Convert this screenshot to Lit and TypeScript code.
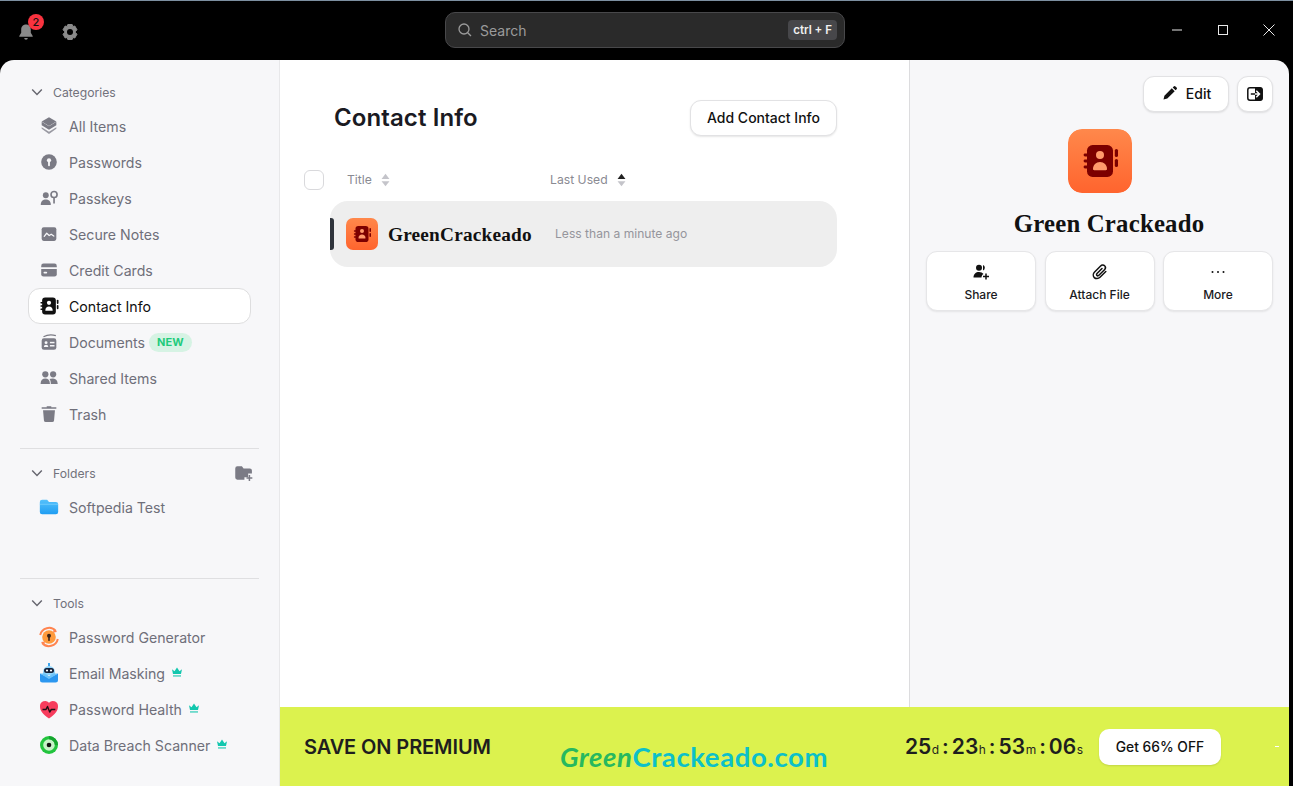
import { LitElement, html, css, svg } from "lit";
import { customElement } from "lit/decorators.js";

const G = "#7b7b85";
const PANEL = "#f7f7f9";
const book = (body: string, cut: string) => svg`
  <rect x="5.500" y="4" width="13" height="16" rx="2.800" fill="${body}"/>
  <rect x="3.800" y="8.300" width="3" height="1.400" rx=".7" fill="${body}"/>
  <rect x="3.800" y="11.300" width="3" height="1.400" rx=".7" fill="${body}"/>
  <rect x="3.800" y="14.300" width="3" height="1.400" rx=".7" fill="${body}"/>
  <rect x="19.400" y="6" width="1.600" height="4" rx=".8" fill="${body}"/>
  <rect x="19.400" y="11" width="1.600" height="4" rx=".8" fill="${body}"/>
  <circle cx="12" cy="9" r="2" fill="${cut}"/>
  <path d="M8.500 16c0-2 1.500-3.500 3.500-3.500s3.500 1.500 3.500 3.500c0 .4-.3.6-.6.6H9.100c-.3 0-.6-.2-.6-.6z" fill="${cut}"/>`;

const icons: Record<string, any> = {
  all: svg`<path d="M12 2.500 20 7.200 12 12 4 7.200z" fill="${G}"/><path d="M4 7.400 12 12.200 20 7.400V11.200L12 16 4 11.200z" fill="${G}"/><path d="M4 13.400 12 18.200 20 13.400V15L12 20.800 4 15z" fill="${G}" opacity=".75"/>`,
  pass: svg`<circle cx="12" cy="12" r="8.500" fill="${G}"/><circle cx="12" cy="10.200" r="2.300" fill="${PANEL}"/><rect x="11" y="11" width="2" height="5.500" rx="1" fill="${PANEL}"/>`,
  passkey: svg`<circle cx="8.500" cy="9" r="3.200" fill="${G}"/><path d="M3 19.500c0-3.800 2.400-5.800 5.500-5.800s5.500 2 5.500 5.800z" fill="${G}"/><circle cx="17.500" cy="8.200" r="3.300" fill="none" stroke="${G}" stroke-width="1.800"/><rect x="16.600" y="11" width="1.800" height="7" fill="${G}"/>`,
  note: svg`<rect x="4" y="4.500" width="16" height="15" rx="2.200" fill="${G}"/><path d="M6.800 14.500 9.500 11.200l2.700 2.500 2.200-1.500 2.800 2" fill="none" stroke="${PANEL}" stroke-width="1.400" stroke-linecap="round" stroke-linejoin="round"/>`,
  card: svg`<path d="M6 5h12a2.500 2.500 0 0 1 2.500 2.500V9h-17V7.500A2.500 2.500 0 0 1 6 5z" fill="${G}"/><path d="M3.500 11h17v5.500A2.500 2.500 0 0 1 18 19H6a2.500 2.500 0 0 1-2.500-2.500z" fill="${G}"/><rect x="6" y="14" width="4" height="1.800" rx=".9" fill="${PANEL}"/>`,
  contact: svg`<g transform="translate(-1.800 -1.800) scale(1.150)">${book("#111", "#fff")}</g>`,
  doc: svg`<rect x="4" y="8" width="16" height="12.500" rx="2.500" fill="${G}"/><path d="M6 6.300C9 4.600 15 3.800 19.500 5" fill="none" stroke="${G}" stroke-width="1.300"/><circle cx="8.800" cy="12.700" r="1.600" fill="${PANEL}"/><path d="M6.400 17.500c0-1.700 1.100-2.500 2.400-2.500s2.400.8 2.400 2.500z" fill="${PANEL}"/><rect x="13" y="11.800" width="5" height="1.600" fill="${PANEL}"/><rect x="13" y="15.300" width="5" height="1.600" fill="${PANEL}"/>`,
  shared: svg`<circle cx="8" cy="8" r="3.400" fill="${G}"/><circle cx="16.500" cy="8" r="3.400" fill="${G}"/><path d="M2.800 18.500c0-4 2.200-6 5.200-6s5 2 5 6z" fill="${G}"/><path d="M14 18.500c0-2.500-.5-4.200-1.500-5.300 1-.5 2.500-.8 4-.7 3 .2 5 2.200 5 6z" fill="${G}"/>`,
  trash: svg`<path d="M9.500 4.500V3.500h5V4.500H20V6.400H4V4.500z" fill="${G}"/><path d="M5.500 8h13l-1 11a2 2 0 0 1-2 1.800h-7a2 2 0 0 1-2-1.800z" fill="${G}"/>`,
  folder: svg`<defs><linearGradient id="fb" x1="0" y1="0" x2="0" y2="1"><stop offset="0" stop-color="#55c1fb"/><stop offset="1" stop-color="#1f9df2"/></linearGradient></defs><path d="M4.500 4H10l2 2.500h7.500A2.500 2.500 0 0 1 22 9v8.500A2.500 2.500 0 0 1 19.500 20h-15A2.500 2.500 0 0 1 2 17.500v-11A2.500 2.500 0 0 1 4.500 4z" fill="url(#fb)"/><path d="M2 9h20" stroke="#7fd3fd" stroke-width=".8"/>`,
  gen: svg`<circle cx="12" cy="12" r="6.800" fill="#ff9a3c"/><path d="M3.200 10A9 9 0 0 1 18.800 6M20.800 14a9 9 0 0 1-15.600 4" fill="none" stroke="#ff8450" stroke-width="2"/><path d="M17 3.500 20 7l-4 .6zM7 20.500 4 17l4-.6z" fill="#ff8450"/><circle cx="12" cy="10.800" r="2" fill="#3a2418"/><rect x="11.200" y="11.500" width="1.600" height="4.500" rx=".8" fill="#3a2418"/>`,
  mask: svg`<path d="M6 11a6 6 0 0 1 12 0v3H6z" fill="#8fd4fb"/><rect x="11" y="2" width="2" height="3" fill="#3ea5ee"/><rect x="7" y="7" width="10" height="5" rx="2.500" fill="#14213a"/><circle cx="10" cy="9.500" r="1.100" fill="#fff"/><circle cx="14" cy="9.500" r="1.100" fill="#fff"/><path d="M3 12.500 12 17l9-4.500V19a2.500 2.500 0 0 1-2.500 2.500h-13A2.500 2.500 0 0 1 3 19z" fill="#2c97f0"/><path d="M3 12.500h5l4 2.500 4-2.500h5L12 18z" fill="#6cc3fa"/>`,
  health: svg`<path d="M12 21.500C6 17.300 2.800 14 3 9a5.200 5.200 0 0 1 9-3.300A5.200 5.200 0 0 1 21 9c.2 5-3 8.300-9 12.500z" fill="#f73c5d"/><path d="M5.500 12.500h3.500l1.500-3 2.200 5.500 1.600-2.500h4" fill="none" stroke="#1d1014" stroke-width="1.400" stroke-linejoin="round"/>`,
  scan: svg`<circle cx="12" cy="12" r="9" fill="#22c43e"/><circle cx="12" cy="12" r="5.800" fill="#c6f3c8"/><circle cx="12" cy="12" r="2.300" fill="#111"/><path d="M12 3a9 9 0 0 1 9 9h-3.200A5.800 5.800 0 0 0 12 6.200z" fill="#15a52f"/>`,
};

const crown = svg`<svg class="crown" viewBox="0 0 12 12"><path d="M1 3.200 3.500 5.300 6 1.500 8.500 5.300 11 3.200 10 8H2z" fill="#12c7ae"/><rect x="2" y="9" width="8" height="1.800" fill="#12c7ae" opacity=".6"/></svg>`;
const chevron = html`<svg class="chev" viewBox="0 0 10 6"><path d="M1 1l4 4 4-4" fill="none" stroke="#66666f" stroke-width="1.200"/></svg>`;
const sort = (active: boolean) => html`<svg class="sort" viewBox="0 0 8 12"><path d="M4 .5 7.500 5H.5z" fill="${active ? "#222" : "#c4c4ca"}"/><path d="M4 11.500 .5 7h7z" fill="#c4c4ca"/></svg>`;

const gradId = { n: 0 };
const tile = (cls: string) => {
  const id = "tg" + gradId.n++;
  return html`<svg class="${cls}" viewBox="0 0 32 32">
    <defs><linearGradient id="${id}" x1="0" y1="0" x2="0" y2="1"><stop offset="0" stop-color="#ff884b"/><stop offset="1" stop-color="#ff642e"/></linearGradient></defs>
    <rect width="32" height="32" rx="7" fill="url(#${id})"/>
    <g transform="translate(4 4)">${book("#7c0000", "#ff9a6c")}</g>
  </svg>`;
};

type Item = { k: string; t: string; active?: boolean; badge?: boolean; crown?: boolean; big?: boolean };
const cats: Item[] = [
  { k: "all", t: "All Items" },
  { k: "pass", t: "Passwords" },
  { k: "passkey", t: "Passkeys" },
  { k: "note", t: "Secure Notes" },
  { k: "card", t: "Credit Cards" },
  { k: "contact", t: "Contact Info", active: true },
  { k: "doc", t: "Documents", badge: true },
  { k: "shared", t: "Shared Items" },
  { k: "trash", t: "Trash" },
];
const tools: Item[] = [
  { k: "gen", t: "Password Generator", big: true },
  { k: "mask", t: "Email Masking", crown: true, big: true },
  { k: "health", t: "Password Health", crown: true, big: true },
  { k: "scan", t: "Data Breach Scanner", crown: true, big: true },
];

@customElement("app-root")
export class AppRoot extends LitElement {
  static styles = css`
    :host { display: block; width: 1293px; height: 786px; overflow: hidden; background: #000; font-family: Inter, "Liberation Sans", sans-serif; color: #111; }
    * { box-sizing: border-box; }
    .app { height: 786px; display: flex; flex-direction: column; border-top: 1px solid #7c8fa0; }
    .top { flex: 0 0 59px; display: grid; grid-template-columns: 445px 400px 1fr; align-items: center; background: #000; padding-bottom: 1px; }
    .top-left { display: flex; align-items: center; gap: 26px; padding-left: 17px; position: relative; margin-top: 3px; }
    .top-left svg { width: 18px; height: 18px; display: block; }
    .badge { position: absolute; left: 28px; top: -9px; width: 16px; height: 16px; border-radius: 50%; background: #f9333f; color: #111; font-size: 11px; font-weight: 500; display: flex; align-items: center; justify-content: center; }
    .search { height: 36px; background: #2a2a2a; border: 1px solid #48484a; border-radius: 10px; display: flex; align-items: center; padding: 0 7px 0 11px; color: #9b9b9b; font-size: 14px; gap: 7px; }
    .search svg { width: 16px; height: 16px; }
    .kbd { margin-left: auto; background: #47474a; color: #f0f0f0; font-size: 11.500px; font-weight: 600; border-radius: 4px; padding: 0 5px; height: 20px; display: flex; align-items: center; }
    .winbtns { display: flex; justify-content: flex-end; align-items: center; gap: 34px; padding-right: 18px; }
    .winbtns svg { width: 12px; height: 12px; display: block; }

    .body { flex: 1; display: flex; min-height: 0; }
    .side { flex: 0 0 280px; background: #f7f7f9; border-radius: 14px 0 0 0; border-right: 1px solid #e8e8ea; display: flex; flex-direction: column; padding: 20px 20px 23px; }
    .head { height: 24px; display: flex; align-items: center; font-size: 12.200px; color: #72727c; padding-left: 11px; }
    .chev { width: 12px; height: 8px; margin-right: 10px; }
    .items { margin-top: 4px; }
    .item { height: 36px; display: flex; align-items: center; font-size: 14.150px; color: #6f6f7a; margin-left: 8px; width: 223px; padding-left: 11px; border: 1px solid transparent; border-radius: 12px; }
    .item svg.ic { width: 22px; height: 22px; margin-right: 9px; flex: none; margin-left: -2px; }
    .item svg.ic.big { width: 24px; height: 24px; margin-right: 8px; margin-left: -3px; }
    .item.active { background: #fff; border-color: #dededf; color: #111; }
    .new { margin-left: 4px; background: #d6f3e4; color: #1fcb7c; font-size: 11px; font-weight: 700; border-radius: 10px; height: 19px; padding: 0 8px; display: flex; align-items: center; }
    .crown { width: 12px; height: 12px; margin-left: 6px; margin-top: -2px; }
    .div { height: 1px; background: #dfdfe1; margin-top: 16px; margin-bottom: 12px; }
    .foldadd { margin-left: auto; width: 20px; height: 20px; margin-right: 5px; }
    .spacer { flex: 1; }
    .tdiv { margin-top: 0; }

    .right { flex: 1; display: flex; flex-direction: column; min-width: 0; padding-right: 4px; }
    .upper { flex: 1; display: flex; min-height: 0; }
    .list { flex: 0 0 629px; background: #fff; padding: 40px 72px 0 50px; }
    .lhead { display: flex; align-items: center; justify-content: space-between; padding-left: 4px; height: 36px; }
    h1 { margin: 0 0 2px; font-size: 24px; font-weight: 600; color: #1a1a22; letter-spacing: .1px; }
    .btn { background: #fff; border: 1px solid #e2e2e4; border-radius: 11px; box-shadow: 0 1px 2px rgba(0,0,0,.1); font-size: 14px; font-weight: 500; display: flex; align-items: center; justify-content: center; color: #111; padding-bottom: 2px; }
    .add { width: 147px; height: 36px; }
    .cols { margin-left: -26px; margin-top: 34px; height: 20px; display: flex; align-items: center; font-size: 12.200px; color: #8a8a92; padding-bottom: 1px; }
    .check { width: 20px; height: 20px; border: 1px solid #d9d9dc; border-radius: 6px; margin-right: 23px; background: #fff; margin-top: 1px; }
    .col1 { width: 203px; display: flex; align-items: center; }
    .col2 { display: flex; align-items: center; }
    .sort { width: 9px; height: 14px; margin-left: 9px; }
    .row { position: relative; margin-top: 11px; height: 66px; background: #eee; border-radius: 18px; display: flex; align-items: center; padding-left: 16px; }
    .row::before { content: ""; position: absolute; left: 0; top: 17px; width: 4px; height: 32px; background: #2f343c; border-radius: 0 3px 3px 0; }
    .ticon { width: 32px; height: 32px; margin-right: 10px; flex: none; }
    .name { font-family: "Liberation Serif", serif; font-size: 19.300px; font-weight: 700; letter-spacing: .2px; color: #111; width: 167px; margin-top: 2px; }
    .time { font-size: 12.100px; color: #95959c; margin-top: -2px; }

    .detail { flex: 0 0 380px; background: #f7f7f9; border-left: 1px solid #dcdcde; border-radius: 0 14px 0 0; padding: 16px 16px 0 16px; display: flex; flex-direction: column; }
    .dtop { display: flex; justify-content: flex-end; gap: 8px; }
    .edit { width: 86px; height: 36px; gap: 8px; }
    .edit svg { width: 16px; height: 16px; margin-left: 1px; }
    .ex { width: 36px; height: 36px; padding-bottom: 0; }
    .ex svg { width: 20px; height: 20px; }
    .dicon { width: 64px; height: 64px; align-self: center; margin-top: 17px; border-radius: 14px; }
    h2 { margin: 17px 0 0; padding-left: 19px; text-align: center; font-family: "Liberation Serif", serif; font-size: 24.800px; font-weight: 700; letter-spacing: .2px; line-height: 28px; color: #111; }
    .acts { display: grid; grid-template-columns: repeat(3, 1fr); gap: 8.500px; margin-top: 13px; }
    .act { height: 60px; background: #fff; border: 1px solid #e6e6e8; border-radius: 11px; box-shadow: 0 1px 2px rgba(0,0,0,.08); display: flex; flex-direction: column; align-items: center; justify-content: center; gap: 6px; padding-top: 2px; font-size: 12px; font-weight: 500; color: #1a1a22; }
    .act svg { width: 18px; height: 18px; }

    .promo { flex: 0 0 79px; background: #dcf24e; display: flex; align-items: center; padding: 0 68px 0 24px; position: relative; }
    .save { font-size: 20px; font-weight: 600; color: #1e1e1e; letter-spacing: -.1px; }
    .brand { position: absolute; left: 280px; top: 34px; font-family: Lato, sans-serif; font-weight: 700; font-size: 27.500px; letter-spacing: .6px; color: #0cc0c8; line-height: 32px; }
    .brand span { color: #27b85f; font-style: italic; }
    .count { margin-left: auto; display: flex; align-items: baseline; font-size: 21px; font-weight: 600; color: #1e1e1e; margin-right: 16px; }
    .count small { font-size: 12px; font-weight: 400; margin-left: .5px; }
    .count i { font-style: normal; padding: 0 3px; }
    .get { width: 122px; height: 36px; background: #fff; border-radius: 10px; font-size: 13.800px; font-weight: 500; color: #111; display: flex; align-items: center; justify-content: center; box-shadow: 0 1px 2px rgba(0,0,0,.12); }
    .dash { position: absolute; left: 995px; top: 39px; width: 4px; height: 1px; background: #fff; }
  `;

  private row(i: Item) {
    return html`<div class="item ${i.active ? "active" : ""}">
      <svg class="ic ${i.big ? "big" : ""}" viewBox="0 0 24 24">${icons[i.k]}</svg>${i.t}
      ${i.badge ? html`<span class="new">NEW</span>` : ""}
      ${i.crown ? crown : ""}
    </div>`;
  }

  render() {
    return html`<div class="app">
      <div class="top">
        <div class="top-left">
          <svg viewBox="0 0 18 18"><path d="M9 1.500c-3 0-4.800 2.200-4.800 5v3.200L2.300 13v.8h13.400V13l-1.900-3.300V6.500c0-2.800-1.800-5-4.800-5z" fill="#8a8a8a"/><path d="M7.200 15h3.600a1.800 1.800 0 0 1-3.600 0z" fill="#8a8a8a"/></svg>
          <span class="badge">2</span>
          <svg viewBox="0 0 18 18"><path d="M6.800 1.500h4.400l.6 2 2-.5 2.200 3.800-1.500 1.500v1.400l1.500 1.500-2.200 3.800-2-.5-.6 2H6.800l-.6-2-2 .5L2 11.200l1.500-1.500V8.300L2 6.800 4.200 3l2 .5z" fill="#8a8a8a" stroke="#8a8a8a" stroke-linejoin="round"/><circle cx="9" cy="9" r="3" fill="#000"/></svg>
        </div>
        <div class="search">
          <svg viewBox="0 0 16 16"><circle cx="7" cy="7" r="5" fill="none" stroke="#9b9b9b" stroke-width="1.300"/><path d="M10.700 10.700 14 14" stroke="#9b9b9b" stroke-width="1.300"/></svg>
          Search
          <span class="kbd">ctrl + F</span>
        </div>
        <div class="winbtns">
          <svg viewBox="0 0 12 12"><path d="M1 6h10" stroke="#e8e8e8"/></svg>
          <svg viewBox="0 0 12 12"><rect x="1.500" y="1.500" width="9" height="9" fill="none" stroke="#e8e8e8"/></svg>
          <svg viewBox="0 0 12 12"><path d="M.5.5l11 11M11.500.5l-11 11" stroke="#e8e8e8"/></svg>
        </div>
      </div>
      <div class="body">
        <aside class="side">
          <div class="head">${chevron}Categories</div>
          <div class="items">${cats.map((c) => this.row(c))}</div>
          <div class="div"></div>
          <div class="head">${chevron}Folders
            <svg class="foldadd" viewBox="0 0 24 24"><path d="M4 4h5.500l2 2.500H19A2.500 2.500 0 0 1 21.500 9v3.500H17V17h-4.500v3H4a2.500 2.500 0 0 1-2.500-2.500v-11A2.500 2.500 0 0 1 4 4z" fill="${G}"/><path d="M18.500 14.500v7M15 18h7" stroke="${G}" stroke-width="1.800"/></svg>
          </div>
          <div class="items">${this.row({ k: "folder", t: "Softpedia Test" })}</div>
          <div class="spacer"></div>
          <div class="div tdiv"></div>
          <div class="head">${chevron}Tools</div>
          <div class="items">${tools.map((c) => this.row(c))}</div>
        </aside>
        <div class="right">
          <div class="upper">
            <section class="list">
              <div class="lhead"><h1>Contact Info</h1><div class="btn add">Add Contact Info</div></div>
              <div class="cols">
                <div class="check"></div>
                <div class="col1">Title${sort(false)}</div>
                <div class="col2">Last Used${sort(true)}</div>
              </div>
              <div class="row">
                ${tile("ticon")}
                <div class="name">GreenCrackeado</div>
                <div class="time">Less than a minute ago</div>
              </div>
            </section>
            <section class="detail">
              <div class="dtop">
                <div class="btn edit"><svg viewBox="0 0 16 16"><path d="M1.500 14.500l.9-3.800 7.400-7.400 2.900 2.900-7.400 7.400zM10.700 2.400l1-1a1.300 1.300 0 0 1 1.800 0l1.100 1.100a1.300 1.300 0 0 1 0 1.800l-1 1z" fill="#111"/></svg>Edit</div>
                <div class="btn ex"><svg viewBox="0 0 20 20"><rect x="2.800" y="3.800" width="14.400" height="12.400" rx="2.200" fill="#fff" stroke="#111" stroke-width="1.500"/><path d="M10 3.500h5A2.500 2.500 0 0 1 17.500 6v8a2.500 2.500 0 0 1-2.500 2.500h-5z" fill="#111"/><path d="M10 10h4.200M11.300 6.800 14.500 10l-3.200 3.200" fill="none" stroke="#fff" stroke-width="1.500"/><path d="M5.800 10H10" stroke="#111" stroke-width="1.500"/></svg></div>
              </div>
              ${tile("dicon")}
              <h2>Green Crackeado</h2>
              <div class="acts">
                <div class="act"><svg viewBox="0 0 18 18"><circle cx="7" cy="4.700" r="3" fill="#111"/><path d="M11 2a3 3 0 0 1 0 5.500z" fill="#111"/><path d="M1.500 14.500c0-3.500 2.300-5.500 5.500-5.500 2 0 3.500.7 4.500 2-1.200.6-2 2-2 3.500z" fill="#111"/><path d="M14 10.500v6M11 13.500h6" stroke="#111" stroke-width="1.500"/></svg>Share</div>
                <div class="act"><svg viewBox="0 0 18 18"><path d="M14.800 8.500 9 14.300c-1.700 1.700-4.300 1.700-5.700.3-1.500-1.500-1.300-4 .3-5.600l6-6c1.100-1.100 3-1.200 4-.2s1 2.800-.1 3.900l-5.600 5.600c-.6.600-1.500.6-2 .1s-.5-1.300.1-1.900l5-5" fill="none" stroke="#111" stroke-width="1.500" stroke-linecap="round"/></svg>Attach File</div>
                <div class="act"><svg viewBox="0 0 18 18"><circle cx="3.500" cy="9" r="1" fill="#111"/><circle cx="9" cy="9" r="1" fill="#111"/><circle cx="14.500" cy="9" r="1" fill="#111"/></svg>More</div>
              </div>
            </section>
          </div>
          <div class="promo">
            <div class="save">SAVE ON PREMIUM</div>
            <div class="brand"><span>Green</span>Crackeado.com</div>
            <div class="count">25<small>d</small><i>:</i>23<small>h</small><i>:</i>53<small>m</small><i>:</i>06<small>s</small></div>
            <div class="get">Get 66% OFF</div>
            <div class="dash"></div>
          </div>
        </div>
      </div>
    </div>`;
  }
}
